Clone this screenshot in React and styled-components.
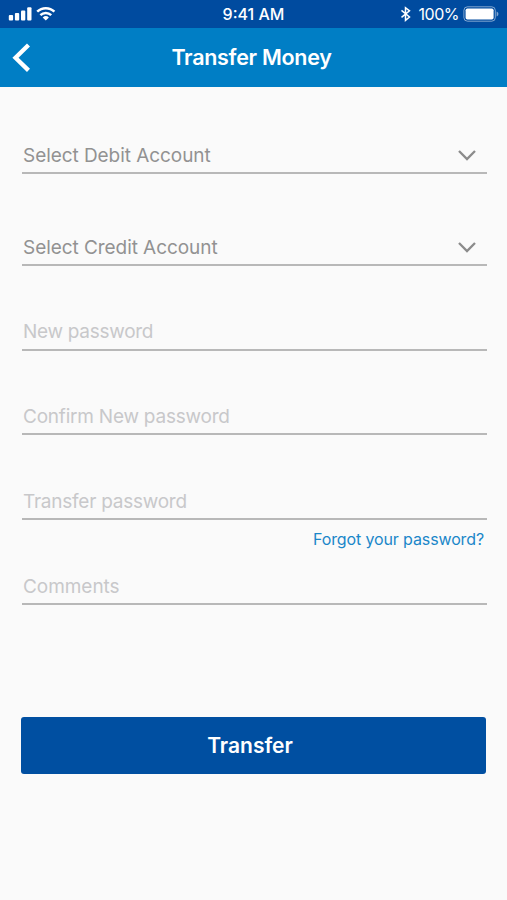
import React from "react";
import styled, { createGlobalStyle } from "styled-components";

const selects = [
    { label: "Select Debit Account", gap: 52 },
    { label: "Select Credit Account", gap: 45 },
];

const inputs = [
    { label: "New password", spacing: "-0.28px", gap: 44, drop: 1 },
    { label: "Confirm New password", spacing: "-0.22px", gap: 45, drop: 2 },
    { label: "Transfer password", spacing: "-0.24px", gap: 45, drop: 2, forgot: true },
    { label: "Comments", spacing: "-0.05px", gap: 45, drop: 2 },
];

function App() {
    return (<>
    <GlobalStyle />
    <Screen>
        <StatusBar>
            <StatusGroup>
                <svg width="48" height="16" viewBox="0 0 48 16" fill="#fff">
                    <rect x="0.8" y="8.9" width="4.3" height="5.6" rx="1" />
                    <rect x="6.9" y="7" width="4.3" height="7.5" rx="1" />
                    <rect x="13" y="4.4" width="4.3" height="10.1" rx="1" />
                    <rect x="19.2" y="1.2" width="4.3" height="13.3" rx="1" />
                    <g fill="none" stroke="#fff" strokeWidth="2.5">
                        <path d="M29.2 5.7a12.4 12.4 0 0 1 17.2 0" />
                        <path d="M32.4 9.2a7.8 7.8 0 0 1 10.8 0" />
                    </g>
                    <path d="M34.7 11.5a4.6 4.6 0 0 1 6.2 0L37.8 14.6z" />
                </svg>
            </StatusGroup>
            <Clock>9:41 AM</Clock>
            <StatusGroup $end>
                <svg width="12" height="16" viewBox="0 0 12 16" fill="none" stroke="#fff" strokeWidth="1.5">
                    <path d="M1.5 4.4l8 6.6-4 3.3V1.7l4 3.1-8 6.6" />
                </svg>
                <Percent>100%</Percent>
                <svg width="36" height="18" viewBox="0 0 36 18">
                    <rect x="0.9" y="1.8" width="31.4" height="14.4" rx="3.6" fill="none" stroke="#fff" strokeOpacity="0.5" />
                    <rect x="2.6" y="3.5" width="28" height="11" rx="1.8" fill="#fff" />
                    <path d="M33.6 6.6c1.2.5 1.8 1.4 1.8 2.4s-.6 1.9-1.8 2.4z" fill="#fff" fillOpacity="0.5" />
                </svg>
            </StatusGroup>
        </StatusBar>
        <Header>
            <BackButton aria-label="Back">
                <svg width="19" height="30" viewBox="0 0 19 30" fill="none" stroke="#fff" strokeWidth="4.3">
                    <path d="M16.5 2L3.5 14.7l13 12.7" />
                </svg>
            </BackButton>
            <Title>Transfer Money</Title>
            <HeaderSpace />
        </Header>
        <Form>
            {selects.map((item) => (
                <SelectField key={item.label} $gap={item.gap}>
                    <span>{item.label}</span>
                    <svg width="18" height="12" viewBox="0 0 18 12" fill="none" stroke="#8b8b8b" strokeWidth="2.3">
                        <path d="M1 1l8 8 8-8" />
                    </svg>
                </SelectField>
            ))}
            {inputs.map((item) => (
                <React.Fragment key={item.label}>
                    <InputField $spacing={item.spacing} $gap={item.gap} $drop={item.drop}>{item.label}</InputField>
                    {item.forgot && <ForgotLink>Forgot your password?</ForgotLink>}
                </React.Fragment>
            ))}
            <SubmitButton>Transfer</SubmitButton>
        </Form>
    </Screen>
    </>);
}

const GlobalStyle = createGlobalStyle`
    *{
        box-sizing:border-box;
    }
    body{
        margin:0;
        background-color:#fafafa;
        font-family:Inter, "Liberation Sans", sans-serif;
    }
    svg{
        display:block;
        flex-shrink:0;
    }
`;

const Screen = styled.div`
    width:507px;
    height:900px;
    display:flex;
    flex-direction:column;
    background-color:#fafafa;
    overflow:hidden;
`;

const StatusBar = styled.div`
    height:28px;
    flex-shrink:0;
    display:grid;
    grid-template-columns:1fr auto 1fr;
    align-items:center;
    padding:0 8px;
    color:white;
    background-color:#004b9f;
`;

const StatusGroup = styled.div`
    display:flex;
    align-items:center;
    justify-content:${({ $end }) => ($end ? "flex-end" : "flex-start")};
`;

const Clock = styled.span`
    font-size:16px;
    font-weight:500;
    line-height:28px;
`;

const Percent = styled.span`
    margin:0 4px 0 7px;
    font-size:16px;
    letter-spacing:-0.5px;
    line-height:28px;
`;

const Header = styled.header`
    height:59px;
    flex-shrink:0;
    display:flex;
    align-items:center;
    justify-content:space-between;
    padding:0 12px;
    color:white;
    background-color:#007ec5;
`;

const BackButton = styled.button`
    width:40px;
    padding:0;
    border:0;
    background:none;
    cursor:pointer;
`;

const HeaderSpace = styled.div`
    width:44px;
`;

const Title = styled.h1`
    margin:0 0 2px;
    font-size:21.5px;
    font-weight:600;
    letter-spacing:-0.28px;
    line-height:30px;
`;

const Form = styled.div`
    display:flex;
    flex-direction:column;
    padding:47px 20px 0 22px;
`;

const Field = styled.div`
    height:40px;
    display:flex;
    margin-bottom:${({ $gap }) => $gap}px;
    padding-left:1px;
    border-bottom:2px solid #b8b8b8;
    font-size:19px;
    line-height:40px;
`;

const SelectField = styled(Field)`
    align-items:center;
    justify-content:space-between;
    padding-top:5px;
    padding-right:11px;
    color:#929292;
    letter-spacing:-0.06px;
    cursor:pointer;
`;

const InputField = styled(Field)`
    padding-top:${({ $drop }) => $drop}px;
    color:#c8c8ca;
    letter-spacing:${({ $spacing }) => $spacing};
`;

const ForgotLink = styled.a`
    height:24px;
    margin:-38px 3px 14px 0;
    align-self:flex-end;
    color:#1a87c9;
    font-size:16px;
    letter-spacing:-0.12px;
    line-height:24px;
    cursor:pointer;
`;

const SubmitButton = styled.button`
    height:57px;
    margin:67px 1px 0 -1px;
    padding:0 7px 1px 0;
    border:0;
    border-radius:3px;
    color:white;
    background-color:#004fa1;
    font-family:inherit;
    font-size:21px;
    font-weight:600;
    cursor:pointer;
`;

export default App;
